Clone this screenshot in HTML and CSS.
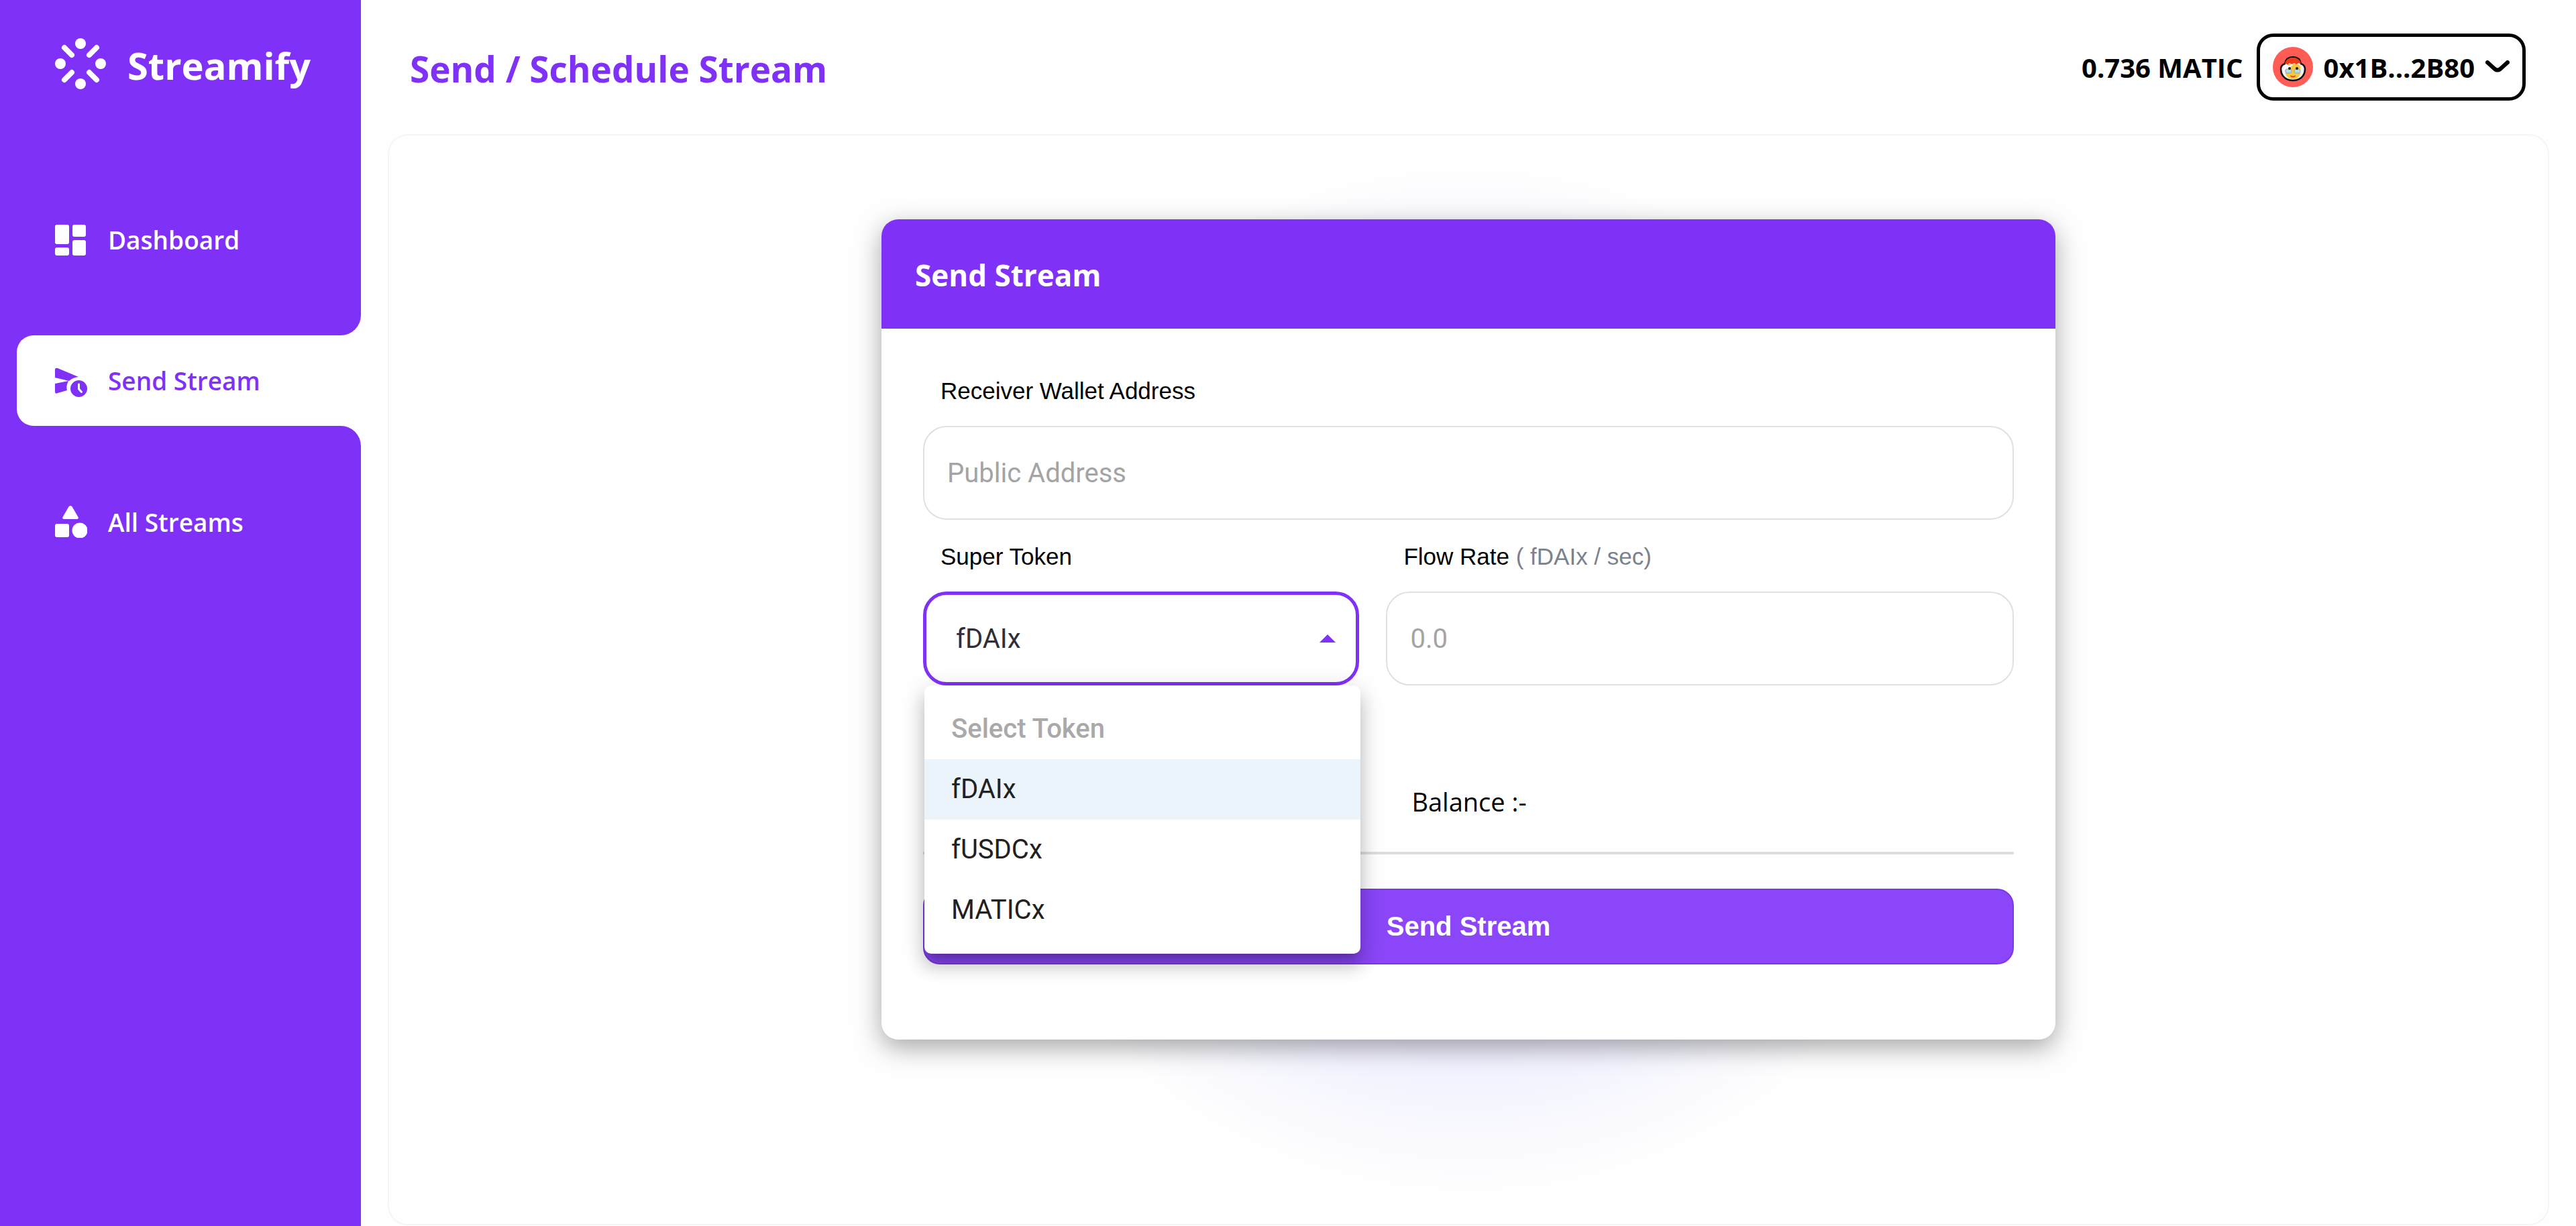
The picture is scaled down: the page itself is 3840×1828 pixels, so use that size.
FILE: index.html
```html
<!DOCTYPE html>
<html lang="en">
<head>
<meta charset="utf-8">
<title>Streamify</title>
<link rel="stylesheet" href="styles.css">
</head>
<body>
<div class="app">
  <aside class="sidebar">
    <a class="brand" href="#">
      <svg class="brand-logo" viewBox="0 0 76 76" aria-hidden="true">
        <g fill="currentColor">
          <circle cx="38" cy="8" r="8"/><circle cx="38" cy="68" r="8"/>
          <circle cx="8" cy="38" r="8"/><circle cx="68" cy="38" r="8"/>
        </g>
        <path d="M14 14 25 25M62 14 51 25M14 62 25 51M62 62 51 51" stroke="currentColor" stroke-width="8" stroke-linecap="round"/>
      </svg>
      <span>Streamify</span>
    </a>
    <nav class="nav">
      <a class="nav-item nav-first" href="#">
        <svg class="nav-icon" viewBox="0 0 48 48" aria-hidden="true"><g fill="currentColor"><rect x="0" y="1" width="21" height="29" rx="3"/><rect x="26" y="1" width="20" height="18" rx="3"/><rect x="0" y="35" width="21" height="12" rx="3"/><rect x="26" y="24" width="20" height="23" rx="3"/></g></svg>
        <span>Dashboard</span>
      </a>
      <a class="nav-item nav-active" href="#" aria-current="page">
        <svg class="nav-icon" viewBox="0 0 48 48" aria-hidden="true">
          <path fill="currentColor" d="M0 7Q0 4 4 5L35 18Q26 19 21 24L0 19ZM0 28 20 24Q16 32 18 38L4 42Q0 44 0 40Z"/>
          <circle cx="35.500" cy="35.500" r="12.500" fill="currentColor"/>
          <path d="M35.500 29V36L39.500 40.500" fill="none" stroke="#fff" stroke-width="3" stroke-linecap="round"/>
        </svg>
        <span>Send Stream</span>
      </a>
      <a class="nav-item nav-last" href="#">
        <svg class="nav-icon" viewBox="0 0 48 48" aria-hidden="true"><g fill="currentColor"><path d="M20.500 1.500Q23 -1.500 25.500 1.500L34.500 17Q35.500 20 32.500 20H13.500Q10.500 20 11.500 17Z"/><rect x="0" y="27" width="21" height="20" rx="3"/><circle cx="37" cy="37" r="11.500"/></g></svg>
        <span>All Streams</span>
      </a>
    </nav>
  </aside>

  <div class="page">
    <header class="topbar">
      <h1 class="page-title">Send / Schedule Stream</h1>
      <div class="account">
        <span class="account-balance">0.736 MATIC</span>
        <button class="wallet" type="button">
          <svg class="avatar" viewBox="0 0 60 60" aria-hidden="true">
            <circle cx="30" cy="30" r="30" fill="#ff5c55"/>
            <path d="M18 25Q20 15 30 15T42 25Q48 27 48 33T45 43Q40 50 30 50T15 43Q12 39 12 33T18 25Z" fill="#f4f2f0" stroke="#111" stroke-width="2.500"/>
            <path d="M19 28Q30 21 41 28V40Q38 48 30 48T19 40Z" fill="#fbc63c"/>
            <path d="M18 25Q20 16 30 16T42 25L38 24 35 26 32 24 28 26 25 24 22 27Z" fill="#f03a17"/>
            <path d="M17 29 20 25 24 28 28 25 30 27Q25 30 22 34H16Z" fill="#fff"/>
            <rect x="19" y="33" width="9" height="6" rx="2" fill="#b9dbe0" stroke="#87a9ad"/><rect x="32" y="33" width="9" height="6" rx="2" fill="#b9dbe0" stroke="#87a9ad"/>
            <circle cx="25" cy="32" r="2" fill="#1b1b1b"/><circle cx="36" cy="32" r="2" fill="#1b1b1b"/>
            <path d="M26 43Q30 45 34 43Q30 47 26 43Z" fill="#ef3b22" stroke="#ef3b22"/>
          </svg>
          <span>0x1B...2B80</span>
          <svg class="chevron" viewBox="0 0 36 20" aria-hidden="true"><path d="M3 3 14 13Q18 16 22 13L33 3" fill="none" stroke="currentColor" stroke-width="6" stroke-linecap="round"/></svg>
        </button>
      </div>
    </header>

    <main class="content">
      <section class="card">
        <h2 class="card-title">Send Stream</h2>
        <form class="form">
          <label class="label" for="receiver">Receiver Wallet Address</label>
          <input class="field" id="receiver" type="text" placeholder="Public Address">
          <div class="columns">
            <div class="column">
              <label class="label" for="token">Super Token</label>
              <div class="select-wrap">
                <button class="field select" id="token" type="button" aria-haspopup="listbox" aria-expanded="true">
                  <span>fDAIx</span>
                  <svg class="caret" viewBox="0 0 24 12" aria-hidden="true"><path d="M0 12 12 0 24 12Z" fill="currentColor"/></svg>
                </button>
                <ul class="menu" role="listbox" aria-labelledby="token">
                  <li class="option option-disabled" role="option" aria-disabled="true">Select Token</li>
                  <li class="option option-selected" role="option" aria-selected="true">fDAIx</li>
                  <li class="option" role="option">fUSDCx</li>
                  <li class="option" role="option">MATICx</li>
                </ul>
              </div>
            </div>
            <div class="column">
              <label class="label" for="rate">Flow Rate <span class="unit">( fDAIx / sec)</span></label>
              <input class="field" id="rate" type="text" placeholder="0.0">
              <p class="token-balance">Balance :-</p>
            </div>
          </div>
          <hr class="rule">
          <button class="submit" type="button">Send Stream</button>
        </form>
      </section>
    </main>
  </div>
</div>
</body>
</html>
```

FILE: styles.css
```css
* {
  box-sizing: border-box;
}

:root {
  --purple: #8031f8;
  --ui: "Open Sans", "Noto Sans", sans-serif;
  --form: "Liberation Sans", Arial, sans-serif;
  --field: Roboto, sans-serif;
}

body {
  margin: 0;
  background: #fefefe;
  color: #000;
  font-family: var(--ui);
}

.app {
  display: flex;
  min-height: 100vh;
}

/* Sidebar */
.sidebar {
  display: flex;
  flex-direction: column;
  flex: 0 0 538px;
  background: #fefefe;
}

.brand {
  display: flex;
  gap: 32px;
  padding: 57px 0 0 82px;
  height: 290px;
  background: var(--purple);
  color: #fff;
  font-size: 56px;
  font-weight: 700;
  line-height: 80px;
  text-decoration: none;
}

.brand-logo {
  width: 76px;
  height: 76px;
}

.nav {
  display: flex;
  flex: 1;
  flex-direction: column;
  background: linear-gradient(90deg, var(--purple) 50%, transparent 50%);
}

.nav-item {
  display: flex;
  align-items: center;
  gap: 31px;
  height: 135px;
  padding-left: 82px;
  color: #fff;
  font-size: 37px;
  font-weight: 600;
  text-decoration: none;
}

.nav-icon {
  width: 48px;
  height: 48px;
}

.nav-first {
  height: 210px;
  padding-bottom: 75px;
  background: var(--purple);
  border-bottom-right-radius: 30px;
}

.nav-active {
  margin-left: 25px;
  padding-left: 57px;
  background: #fefefe;
  border-radius: 25px 0 0 25px;
  color: var(--purple);
}

.nav-last {
  flex: 1;
  align-items: flex-start;
  padding-top: 119px;
  background: var(--purple);
  border-top-right-radius: 30px;
  line-height: 50px;
}

/* Page */
.page {
  display: flex;
  flex: 1;
  flex-direction: column;
  padding: 0 40px 1px;
}

.topbar {
  display: flex;
  align-items: center;
  justify-content: space-between;
  height: 200px;
  padding: 0 35px 0 33px;
}

.page-title {
  margin: 0;
  padding-top: 5px;
  color: var(--purple);
  font-size: 53px;
  font-weight: 700;
}

.account {
  display: flex;
  align-items: center;
  gap: 20px;
  font-size: 40px;
  font-weight: 700;
}

.wallet {
  display: flex;
  align-items: center;
  gap: 16px;
  height: 100px;
  padding: 0 19px;
  background: #fefefe;
  border: 5px solid #000;
  border-radius: 25px;
  color: #000;
  font: inherit;
}

.avatar {
  width: 60px;
  height: 60px;
}

.chevron {
  width: 36px;
  height: 20px;
}

.content {
  flex: 1;
  padding: 125px 0;
  background: radial-gradient(circle 760px at 50% 50%, #e9e5ff, #eeebff 500px, #f3f3fe 600px, #f9f9fe 680px, #fefefe);
  border: 2px solid #f5f5f5;
  border-radius: 30px;
}

/* Form card */
.card {
  width: 1750px;
  max-width: 100%;
  margin: 0 auto;
  background: #fff;
  border-radius: 25px;
  box-shadow: 0 12px 38px rgba(0, 0, 0, 0.35);
}

.card-title {
  margin: 0;
  padding: 3px 50px 0;
  background: var(--purple);
  border-radius: 25px 25px 0 0;
  color: #fff;
  font-size: 44px;
  font-weight: 700;
  line-height: 160px;
}

.form {
  padding: 64px 62px 112px;
}

.label {
  display: block;
  padding-left: 26px;
  font-family: var(--form);
  font-size: 35px;
  line-height: 58px;
}

.unit {
  color: #7a828e;
}

.field {
  display: block;
  width: 100%;
  height: 140px;
  margin-top: 23px;
  padding: 0 34px;
  background: #fff;
  border: 2px solid #e0e0e0;
  border-radius: 35px;
  color: #2f2f3a;
  font-family: var(--field);
  font-size: 40px;
}

.field::placeholder {
  color: #a4a4a4;
  opacity: 1;
}

.columns {
  display: grid;
  grid-template-columns: 650fr 935fr;
  gap: 40px;
  margin-top: 26px;
}

.select-wrap {
  position: relative;
}

.select {
  display: flex;
  align-items: center;
  justify-content: space-between;
  padding: 0 30px 0 44px;
  border: 5px solid var(--purple);
}

.caret {
  width: 24px;
  height: 12px;
  color: var(--purple);
}

.menu {
  position: absolute;
  top: 100%;
  left: 2px;
  width: 100%;
  margin: 0;
  padding: 20px 0;
  background: #fff;
  border-radius: 10px;
  box-shadow: 0 12px 12px -8px rgba(0, 0, 0, 0.2), 0 20px 25px 2px rgba(0, 0, 0, 0.14), 0 8px 35px 5px rgba(0, 0, 0, 0.12);
  list-style: none;
}

.option {
  padding: 0 40px;
  color: #212121;
  font-family: var(--field);
  font-size: 40px;
  line-height: 90px;
}

.option-disabled {
  color: #a9a9a9;
  font-weight: 500;
}

.option-selected {
  background: #ecf4fb;
}

.token-balance {
  margin: 145px 0 0;
  padding-left: 38px;
  font-size: 38px;
  line-height: 56px;
}

.rule {
  height: 4px;
  margin: 47px 0 51px;
  background: #dedede;
  border: 0;
}

.submit {
  display: block;
  width: 100%;
  height: 113px;
  background: #8a46f8;
  border: 2px solid #7c37e8;
  border-radius: 25px;
  color: #fff;
  font-family: var(--form);
  font-size: 40px;
  font-weight: 700;
}
```
